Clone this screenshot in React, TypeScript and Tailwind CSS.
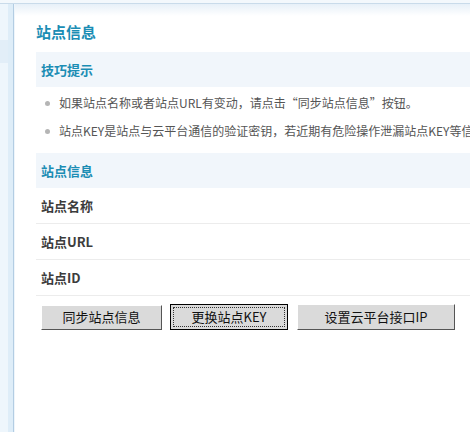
const tips = [
  '如果站点名称或者站点URL有变动，请点击“同步站点信息”按钮。',
  '站点KEY是站点与云平台通信的验证密钥，若近期有危险操作泄漏站点KEY等信息，请点击“更换站点KEY”按钮。',
]

const rows = ['站点名称', '站点URL', '站点ID']

function SectionBar({ title }: { title: string }) {
  return (
    <div className="h-[35px] flex items-center pl-[5px] bg-[#f1f6fb] text-[13px] font-bold text-[#1b8db4]">
      {title}
    </div>
  )
}

export default function App() {
  return (
    <div className="w-[470px] h-[432px] overflow-hidden bg-white flex flex-col font-['Noto_Sans_CJK_SC',sans-serif]">
      {/* top strip */}
      <div className="h-[4px] shrink-0 bg-[#f3f8fc] border-b border-[#c9dbea]" />

      <div className="flex flex-1 min-h-0">
        {/* left rail */}
        <div className="w-[8px] shrink-0 bg-[#eef6fc] flex flex-col">
          <div className="h-[36px]" />
          <div className="h-[23px] bg-[#e2eef8]" />
        </div>
        <div className="w-[6px] shrink-0 bg-[#deedf8] border-r border-[#b3cde3]" />
        <div className="w-[1px] shrink-0 bg-[#eef5fb]" />

        {/* main */}
        <div className="flex-1 min-w-0 bg-gradient-to-b from-[#e7f0f8] via-white via-[12px] to-white">
          <div className="pl-[21px] pt-[17px] w-[560px]">
            <h1 className="h-[31px] text-[15px] font-bold leading-[22px] text-[#1b8db4]">站点信息</h1>

            <SectionBar title="技巧提示" />
            <ul className="pt-[2px] pb-[8px]">
              {tips.map((tip) => (
                <li key={tip} className="h-[28px] flex items-center pl-[9px] whitespace-nowrap text-[12px] text-[#555]">
                  <span className="w-[5px] h-[5px] rounded-full bg-[#b5b5b5] mr-[9px] shrink-0" />
                  {tip}
                </li>
              ))}
            </ul>

            <SectionBar title="站点信息" />
            {rows.map((label) => (
              <div key={label} className="h-[36px] flex items-center pl-[5px] border-b border-[#ececec] text-[13px] font-bold text-[#3c3c3c]">
                {label}
              </div>
            ))}

            {/* buttons */}
            <div className="flex items-center gap-[8px] pl-[5px] pt-[8px]">
              <button className="w-[121px] h-[25px] bg-[#dadada] border border-t-[#fff] border-l-[#fff] border-r-[#555] border-b-[#555] text-[13px] text-[#111]">
                同步站点信息
              </button>
              <button className="w-[118px] h-[26px] bg-[#dadada] border border-black p-[2px] text-[13px] text-[#111]">
                <span className="flex items-center justify-center w-full h-full border border-dotted border-[#333]">
                  更换站点KEY
                </span>
              </button>
              <button className="w-[158px] h-[26px] ml-[1px] bg-[#dadada] border border-t-[#fff] border-l-[#fff] border-r-[#555] border-b-[#555] text-[13px] text-[#111]">
                设置云平台接口IP
              </button>
            </div>
          </div>
        </div>
      </div>
    </div>
  )
}
